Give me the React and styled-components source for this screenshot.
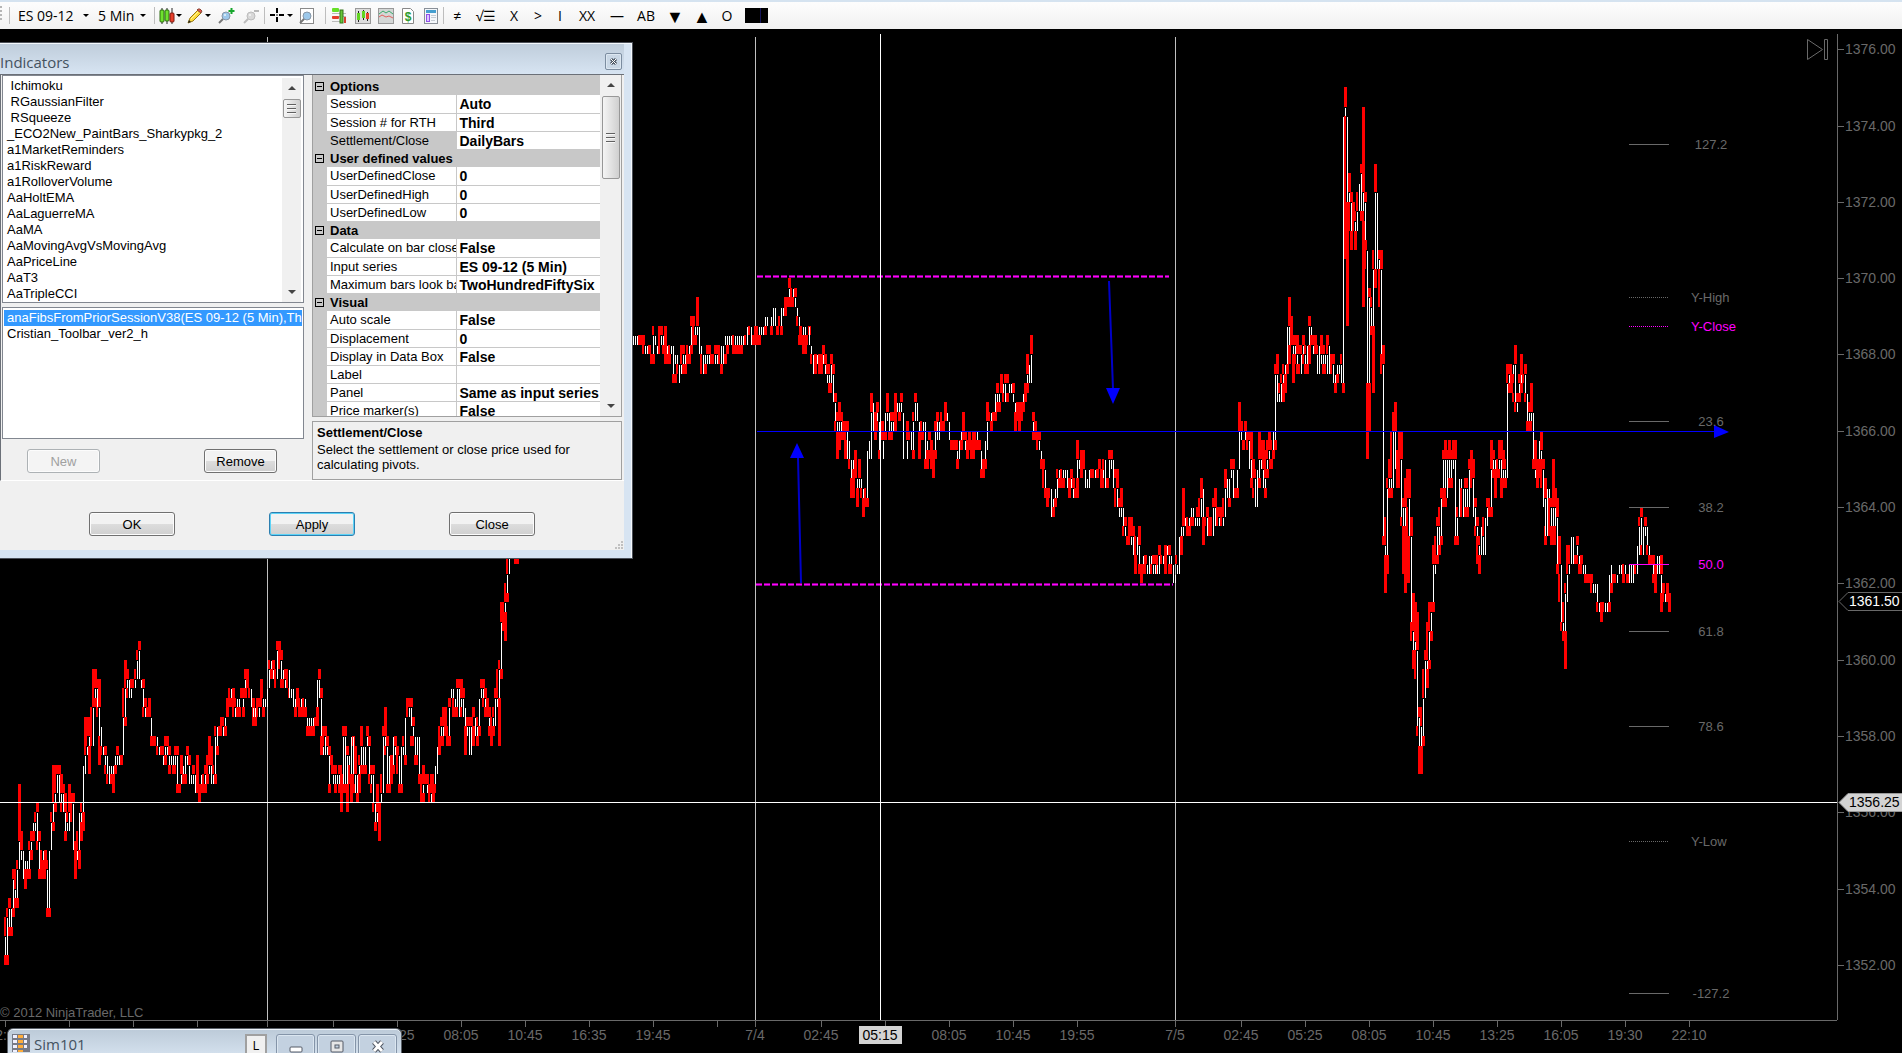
import React from 'react';

import styled, { createGlobalStyle } from 'styled-components';

const GlobalStyle = createGlobalStyle`
  * {
    box-sizing: border-box;
  }

  body {
    margin: 0;
    background: #000;
    overflow: hidden;
    font-family: "Liberation Sans", Arial, sans-serif;
    font-size: 13px;
  }

  button {
    font-family: inherit;
  }
`;

/* ---------- chart data ---------- */

// left, width, high, low (levels are counted in quarter points below 1376.00)
const WICKS = `
4 2 91 93,4 5 95 96,6 2 90 91,8 3 89 90,8 5 92 93,12 3 90 91,12 4 86 87,14 2 87 88,14 5 89 90,16 2 85 86,
18 3 77 83,20 3 82 84,24 7 86 87,24 3 87 88,28 2 83 84,30 3 84 85,30 5 82 83,34 2 80 81,36 3 79 80,36 2 83 84,
38 3 82 83,38 8 86 87,40 2 84 86,42 6 85 86,44 3 84 85,46 5 90 91,50 2 80 81,52 3 81 82,52 4 75 78,52 2 78 79,
54 3 79 80,56 5 75 76,60 3 76 77,60 5 77 78,64 3 78 80,60 2 79 80,68 3 77 80,71 4 78 79,70 2 79 81,66 2 80 81,
64 3 82 83,74 4 83 84,74 3 84 87,76 2 82 84,78 3 84 86,80 2 79 80,80 5 81 82,80 3 82 83,82 3 80 81,84 7 70 72,
84 3 72 73,84 2 73 74,88 3 73 76,90 2 69 73,92 5 65 67,92 2 67 69,94 3 68 69,96 2 69 70,97 4 66 67,98 3 67 69,
98 2 72 73,98 3 73 75,100 2 73 74,104 3 73 74,104 2 75 76,106 2 76 77,110 5 76 77,112 3 77 78,114 3 75 76,
116 3 73 74,119 4 74 75,122 2 67 70,124 3 70 71,124 3 64 66,124 2 66 67,126 3 65 66,126 2 67 68,130 4 66 67,
134 2 65 66,136 2 63 64,138 3 62 63,142 3 66 67,142 2 69 70,144 3 68 69,146 5 69 70,148 3 68 69,150 6 72 73,
156 2 73 74,160 4 73 74,164 5 72 73,164 3 74 75,168 3 73 74,168 3 75 76,172 4 75 76,174 5 73 74,176 5 77 78,
180 3 74 76,182 5 76 77,186 3 73 74,188 3 74 75,192 3 75 76,196 3 74 77,196 11 77 78,198 3 78 79,202 2 76 77,
204 4 75 76,206 3 76 77,206 7 74 75,208 3 72 74,210 3 73 74,212 2 75 76,214 3 76 77,214 2 71 72,216 3 73 74,
218 4 71 72,220 4 70 71,224 3 71 72,226 10 68 69,226 3 69 70,228 2 67 68,232 3 67 68,232 2 69 70,236 5 69 70,
240 7 67 68,242 3 69 70,244 5 65 66,246 3 66 67,248 2 67 68,252 3 68 70,252 5 70 71,256 6 68 69,256 2 69 70,
260 3 66 68,262 3 69 70,268 2 64 65,270 3 65 66,272 3 64 65,274 2 65 67,276 5 62 63,278 5 63 64,278 2 64 65,
280 4 66 67,284 4 65 66,286 2 66 67,288 2 67 68,294 3 69 70,296 3 67 68,296 4 68 69,298 9 69 70,302 2 68 69,
306 9 71 72,314 5 70 71,316 3 69 70,318 3 65 66,320 3 67 68,320 4 72 73,320 3 73 74,322 5 71 72,326 3 72 73,
328 3 73 74,330 3 74 75,328 3 77 78,331 6 75 76,334 3 77 78,338 4 75 76,338 6 77 78,340 3 76 80,342 5 71 72,
346 3 73 74,344 5 77 78,346 3 78 80,348 6 76 77,348 2 75 76,350 6 77 78,350 3 78 79,352 3 72 73,354 3 73 76,
356 3 78 79,358 3 76 78,358 2 74 75,360 3 71 73,360 7 75 76,366 3 71 72,368 3 72 73,368 2 76 77,370 5 75 76,
370 2 77 78,372 2 79 80,374 3 81 82,376 3 77 80,378 3 79 83,380 2 76 78,382 5 71 72,384 3 69 71,386 3 72 73,
384 2 73 74,386 5 77 78,390 3 74 77,392 3 75 76,394 3 72 73,396 3 73 74,396 2 74 76,398 5 77 78,402 2 72 73,
404 3 74 75,406 7 68 69,406 2 69 70,412 3 70 71,410 4 72 73,414 4 74 75,418 11 76 77,422 3 75 76,420 2 77 79,
420 5 78 79,428 8 77 78,428 2 78 79,432 3 78 79,430 4 76 77,438 3 73 74,438 6 72 73,438 2 71 72,440 7 70 71,
442 5 69 70,444 4 71 72,446 5 72 73,448 3 68 69,452 6 69 70,452 2 68 69,456 7 66 67,460 5 67 68,460 2 69 70,
464 3 71 74,466 7 70 71,472 3 69 70,472 3 71 73,476 3 72 73,478 3 71 72,476 2 70 71,480 5 66 67,484 3 67 68,
482 2 68 69,484 7 69 70,486 3 68 69,490 2 70 71,488 7 71 72,490 3 72 73,492 2 69 70,494 4 67 68,496 2 65 67,
498 3 68 73,498 2 64 65,500 3 65 66,500 4 58 60,502 4 60 61,504 3 59 62,504 2 56 58,505 4 57 58,506 2 53 55,
514 5 53 54,638 7 30 31,642 2 31 32,648 3 31 32,650 5 32 33,652 2 29 30,658 5 29 30,658 2 30 32,664 3 29 32,
662 2 31 32,664 7 32 33,668 2 31 32,672 5 34 35,676 2 33 34,680 5 31 32,680 2 32 33,682 5 33 34,686 5 32 33,
686 2 31 32,690 3 31 32,690 5 28 29,692 5 30 31,692 2 29 30,696 3 26 29,700 2 32 34,704 3 33 34,706 5 31 32,
710 4 32 33,714 6 31 32,718 2 32 33,720 3 33 34,724 3 32 33,726 3 31 32,732 11 31 32,732 2 30 31,744 2 30 31,
748 2 29 30,752 9 30 31,754 4 29 30,764 3 29 30,770 3 29 30,776 3 29 30,780 3 29 30,778 2 28 29,784 10 26 27,
784 3 27 28,788 3 24 25,790 2 25 26,794 3 25 26,796 2 28 29,798 10 30 31,799 3 29 30,802 5 31 32,808 3 29 30,
810 2 32 33,814 3 32 34,818 5 32 34,822 3 31 32,824 3 32 33,826 4 33 34,830 3 32 33,832 3 33 34,828 4 35 36,
834 3 36 37,838 3 37 38,836 7 38 39,834 2 39 40,842 7 39 40,836 10 40 41,836 5 41 42,836 3 42 43,844 3 41 43,
848 2 43 44,854 3 42 44,858 3 43 45,852 5 44 45,850 5 45 47,856 3 46 48,860 2 46 47,864 2 46 47,862 7 47 48,
862 3 48 49,870 3 36 38,876 3 37 38,874 4 38 40,874 3 40 41,878 2 42 43,880 4 39 40,881 6 40 41,886 3 36 38,
888 5 40 41,890 7 38 39,894 3 36 40,898 3 38 39,900 3 36 37,906 3 39 41,908 2 40 41,912 2 38 39,912 3 42 43,
914 3 36 37,918 3 40 43,918 6 40 41,920 2 39 40,928 3 40 41,926 11 42 43,924 5 43 44,930 5 43 44,932 3 44 45,
930 3 41 42,934 4 39 40,936 3 38 39,940 5 39 40,940 2 38 39,944 3 37 39,950 8 41 42,956 3 43 44,959 4 41 42,
962 3 38 41,962 5 40 41,966 15 41 42,968 3 40 41,972 4 40 41,966 3 42 43,970 5 42 43,980 5 44 45,982 5 43 44,
986 3 37 39,986 4 38 39,990 3 39 40,992 5 38 39,996 5 37 38,996 3 35 36,1000 3 34 36,1004 5 34 35,1002 2 36 37,
1006 3 36 37,1012 3 35 36,1016 9 37 38,1014 9 38 39,1014 3 39 40,1018 3 39 40,1024 3 36 37,1024 5 35 36,
1026 3 32 34,1030 3 30 32,1032 3 38 39,1034 3 39 40,1032 9 40 41,1036 2 41 42,1040 5 43 44,1042 2 44 46,
1044 6 46 47,1046 3 47 48,1052 3 48 49,1054 3 47 48,1056 2 44 45,1060 2 44 45,1058 7 45 46,1068 3 45 47,
1070 3 44 45,1072 3 45 46,1074 5 46 47,1076 3 45 46,1076 3 41 43,1080 5 42 44,1080 3 44 45,1090 4 44 45,
1096 3 44 45,1098 3 43 44,1102 2 43 44,1100 4 44 46,1106 3 45 46,1108 5 42 43,1114 5 44 45,1116 3 45 46,
1114 2 46 48,1120 3 46 47,1118 5 47 48,1124 3 49 50,1128 5 49 50,1122 2 50 51,1128 7 50 51,1126 4 51 52,
1134 2 51 53,1138 3 50 52,1134 3 53 55,1138 8 54 55,1140 3 55 56,1144 3 53 54,1150 2 54 55,1152 6 53 54,
1156 2 54 55,1158 3 52 53,1160 2 53 54,1164 3 52 55,1168 3 52 53,1168 4 54 55,1175 2 53 54,1180 3 51 53,
1182 3 46 50,1186 2 49 50,1186 5 50 51,1190 4 49 50,1196 3 48 49,1198 2 47 49,1200 3 45 47,1202 3 49 52,
1204 2 49 50,1206 3 48 49,1208 4 49 51,1212 4 47 48,1214 3 46 48,1216 6 48 49,1216 2 49 50,1220 2 49 50,
1222 2 47 49,1224 3 44 46,1228 3 47 48,1230 5 43 44,1234 5 46 47,1238 3 37 40,1240 3 39 40,1244 3 39 40,
1242 3 41 42,1246 7 40 41,1246 2 41 42,1250 3 41 43,1252 3 43 44,1252 4 44 45,1250 3 45 46,1252 2 46 47,
1258 3 40 43,1258 3 45 46,1261 4 41 43,1262 4 43 44,1266 6 41 42,1264 4 42 43,1268 3 40 41,1264 5 44 45,
1264 3 46 47,1269 4 43 44,1272 3 42 43,1274 3 41 42,1274 5 33 34,1276 3 32 33,1278 2 35 36,1280 2 34 35,
1282 2 33 34,1282 3 35 37,1284 3 34 36,1286 3 33 34,1288 3 31 33,1288 3 26 29,1290 3 28 31,1293 6 30 31,
1292 4 32 33,1292 3 33 35,1296 4 31 32,1296 4 33 34,1298 4 31 32,1302 3 30 31,1302 2 32 33,1304 5 33 34,
1304 2 31 32,1308 3 31 33,1308 3 28 29,1310 7 30 31,1314 4 31 32,1320 3 30 31,1320 5 31 32,1322 4 33 34,
1326 3 30 31,1326 2 31 32,1330 5 32 33,1330 2 33 34,1334 3 35 36,1336 3 34 35,1340 2 32 33,1342 3 35 36,
1344 3 4 6,1344 2 7 22,1346 3 16 29,1346 4 16 19,1348 3 13 15,1350 3 15 16,1352 3 16 18,1350 3 19 21,
1352 2 18 19,1354 2 17 18,1354 3 19 21,1356 2 15 17,1360 2 12 13,1362 3 6 15,1364 3 15 16,1360 4 17 18,
1362 3 18 27,1364 3 20 21,1364 2 21 23,1368 3 25 26,1370 2 26 27,1372 2 21 23,1374 3 12 15,1378 5 21 22,
1380 3 22 23,1374 3 23 25,1378 2 23 27,1370 5 29 30,1372 3 30 36,1366 5 35 40,1366 3 40 43,1382 3 31 33,
1380 2 32 34,1382 4 51 52,1384 2 49 51,1384 5 53 55,1384 3 55 57,1386 2 45 46,1388 4 43 45,1390 2 40 43,
1388 5 46 47,1392 5 38 40,1394 3 37 38,1396 4 42 46,1398 5 40 43,1400 2 49 50,1402 3 47 48,1404 3 45 48,
1406 5 44 47,1402 4 50 55,1404 3 55 57,1406 4 51 56,1406 2 48 51,1410 3 49 51,1410 2 60 62,1412 3 57 61,
1414 3 58 62,1416 3 59 63,1412 4 63 65,1414 2 65 66,1416 2 71 72,1418 4 69 70,1420 2 70 71,1418 5 73 76,
1422 3 72 73,1422 2 65 68,1424 4 63 64,1426 3 65 67,1426 2 60 63,1428 3 64 65,1428 2 58 61,1430 3 61 62,
1430 5 58 59,1432 3 52 54,1434 2 51 53,1434 5 53 54,1436 4 49 50,1438 2 48 50,1438 3 52 53,1440 3 51 52,
1440 6 46 47,1442 5 47 48,1442 15 42 43,1444 3 41 42,1448 3 41 43,1452 5 41 43,1448 5 45 46,1454 5 51 52,
1456 2 48 49,1460 2 46 49,1464 4 45 46,1464 5 48 49,1468 3 43 44,1470 3 42 43,1471 4 43 45,1470 2 44 46,
1474 3 47 48,1476 3 49 50,1474 2 50 51,1476 4 51 52,1476 2 52 54,1478 3 53 55,1482 2 49 51,1486 4 47 48,
1488 5 48 49,1490 3 41 44,1492 3 42 43,1492 8 44 45,1494 3 45 47,1496 2 43 44,1498 5 41 43,1502 4 43 44,
1502 3 42 43,1500 7 45 46,1500 3 46 47,1506 6 33 34,1506 2 34 35,1508 5 35 36,1510 4 34 35,1512 2 36 37,
1514 3 31 33,1514 2 37 38,1516 5 36 37,1518 2 34 35,1520 3 32 34,1520 4 34 35,1520 3 35 36,1524 3 33 34,
1524 2 36 37,1528 5 37 38,1530 3 35 37,1526 6 39 40,1534 3 41 43,1532 4 43 44,1536 4 43 45,1536 3 45 46,
1540 3 40 42,1540 5 43 44,1540 2 44 46,1544 3 45 47,1544 2 50 51,1544 3 51 52,1548 7 47 48,1552 3 43 47,
1555 2 46 48,1556 3 47 49,1548 2 48 51,1550 6 50 52,1558 3 51 54,1556 3 54 55,1558 2 55 58,1560 2 60 61,
1562 2 58 60,1562 4 61 62,1564 3 61 65,1564 2 56 57,1566 4 52 54,1566 2 54 55,1574 4 53 54,1576 3 51 52,
1580 3 53 54,1578 4 54 55,1584 9 55 56,1590 2 56 57,1596 2 58 59,1600 4 58 59,1600 3 59 60,1608 3 58 59,
1610 3 56 57,1612 4 55 56,1622 3 55 56,1622 2 54 55,1626 4 55 56,1634 2 54 55,1638 2 49 50,1640 3 48 49,
1644 3 49 50,1640 2 52 53,1646 2 52 53,1648 7 53 54,1654 4 54 55,1652 5 55 56,1654 3 56 57,1660 3 53 55,
1662 3 56 57,1660 4 57 58,1660 3 58 59,1666 3 56 57,1666 5 57 58,1668 3 58 59`;

// x, top, bottom in the same quarter point levels
const BODIES = `
5 93 95,7 91 95,9 90 92,11 90 92,13 87 90,15 88 89,17 86 89,19 83 86,21 84 85,23 84 87,25 85 86,27 85 86,29 84 86,
31 83 84,33 81 82,35 81 82,37 80 83,39 83 86,43 84 85,47 86 90,49 84 90,51 81 84,53 79 81,55 78 79,57 76 78,
59 76 79,61 78 79,63 78 80,65 80 82,67 81 82,69 80 82,73 79 84,77 84 85,79 80 84,81 80 81,83 75 80,85 74 76,
87 73 74,89 72 73,93 69 73,95 67 68,97 67 69,99 69 72,101 71 73,103 73 74,105 74 75,107 74 76,109 75 77,
111 75 76,113 75 76,115 74 75,117 74 75,119 74 75,123 70 74,125 67 70,127 66 67,129 66 68,131 67 68,135 66 67,
137 64 66,139 63 66,141 66 67,143 67 69,145 69 70,151 70 72,157 72 73,159 73 74,163 74 75,165 73 74,167 73 74,
169 74 75,171 74 75,173 74 75,175 74 75,177 74 77,181 76 77,183 75 76,185 74 76,187 74 75,189 75 77,191 76 77,
193 76 77,195 76 78,201 76 77,205 76 77,209 75 76,211 75 77,213 76 77,215 72 76,217 71 73,223 71 72,225 70 71,
231 67 68,235 69 70,237 68 69,239 68 69,243 68 69,245 66 67,251 67 69,253 69 70,255 69 70,259 69 70,263 68 69,
265 68 69,267 67 69,269 65 67,271 64 65,273 65 66,277 63 66,281 64 66,283 65 66,285 66 67,289 65 68,291 67 68,
293 67 69,295 68 69,301 68 69,305 68 69,307 70 71,309 70 71,311 70 71,313 70 71,317 66 69,319 66 68,321 68 72,
323 73 74,325 72 74,327 73 74,329 74 77,333 76 77,335 76 77,337 76 77,339 76 77,343 72 77,345 72 77,347 74 77,
349 74 75,351 72 76,353 72 76,355 76 78,357 76 78,359 75 76,361 73 75,363 73 75,365 73 75,367 72 73,369 73 76,
371 76 77,373 76 79,375 79 81,377 80 81,381 78 79,383 72 78,385 72 73,387 73 77,389 74 77,393 72 75,395 73 74,
399 74 77,401 73 77,403 73 74,405 70 74,409 69 70,411 69 71,413 71 72,415 72 74,417 72 74,419 72 76,423 77 78,
427 77 78,431 78 79,435 75 77,437 73 76,441 71 72,443 71 72,449 69 72,451 67 68,453 67 68,455 68 69,457 67 69,
459 67 70,461 68 69,463 68 70,465 69 71,467 71 72,469 71 74,471 71 74,475 70 72,477 71 72,479 68 71,481 67 68,
483 67 68,485 68 69,489 70 71,493 70 71,495 68 71,497 68 69,499 65 68,501 60 65,505 58 59,507 55 57,509 53 55,
633 30 31,635 30 31,637 30 31,645 31 32,647 31 32,653 30 32,655 30 31,657 31 32,661 30 31,663 30 31,667 31 32,
671 31 32,673 31 34,675 32 33,677 32 33,679 33 35,681 33 34,683 32 33,685 32 33,689 31 32,691 29 31,695 29 30,
697 29 30,699 29 32,701 31 32,703 32 34,705 32 33,707 32 33,709 32 33,715 32 33,717 32 33,721 31 33,723 31 33,
725 30 31,727 30 31,729 30 31,731 30 31,735 30 31,737 30 31,739 30 31,741 30 31,743 30 31,747 29 31,751 29 31,
759 29 30,761 29 30,763 29 30,765 28 29,767 28 29,771 28 29,773 27 29,775 27 29,781 27 29,783 27 28,789 25 26,
793 25 26,795 26 27,797 27 28,799 28 29,803 29 30,805 29 30,809 29 31,811 31 32,813 32 34,817 32 33,823 32 33,
825 33 34,827 34 35,829 34 35,831 33 35,833 34 37,835 37 39,837 39 40,839 39 40,841 39 40,847 40 43,849 41 43,
851 43 45,853 43 44,857 45 46,859 45 46,861 45 46,863 46 47,867 42 47,869 41 43,871 38 43,873 37 40,877 38 39,
879 39 42,883 41 43,885 38 40,887 38 39,889 38 40,891 39 40,893 39 40,897 37 38,899 37 38,901 37 38,903 38 43,
907 41 43,911 40 42,913 39 42,915 37 39,917 37 39,919 39 40,923 39 40,925 39 43,927 41 42,935 40 42,937 39 41,
939 39 41,947 38 39,949 39 41,957 42 43,959 41 43,961 40 41,965 41 42,977 40 41,981 42 44,985 41 43,987 39 42,
991 38 39,995 36 38,997 36 37,999 36 37,1003 35 36,1005 35 37,1009 35 36,1011 35 36,1013 36 37,1015 37 38,
1023 36 37,1027 34 35,1029 33 35,1031 32 35,1033 39 40,1039 41 42,1041 42 43,1045 44 46,1051 46 49,1053 47 48,
1055 46 47,1057 45 47,1059 44 45,1063 44 45,1065 44 45,1067 44 46,1071 45 46,1073 46 47,1077 43 45,1079 43 44,
1085 44 46,1087 45 46,1089 44 46,1095 44 45,1103 44 45,1105 43 46,1109 43 45,1111 43 44,1113 43 46,1117 46 48,
1119 48 49,1121 48 49,1123 48 50,1125 50 51,1131 51 52,1133 51 53,1137 51 53,1139 52 54,1143 53 54,1147 54 55,
1149 53 55,1151 53 54,1153 54 55,1155 54 55,1157 54 55,1159 53 55,1163 53 54,1167 52 53,1169 53 54,1171 53 54,
1173 54 56,1175 55 56,1177 54 55,1179 51 55,1181 50 51,1183 50 51,1185 49 50,1189 49 50,1191 48 49,1193 48 49,
1195 49 50,1197 49 50,1199 49 50,1201 47 49,1203 46 49,1207 49 51,1213 48 51,1215 48 50,1219 49 50,1223 49 50,
1225 46 49,1227 45 47,1229 45 47,1231 44 45,1233 44 47,1237 44 46,1239 40 44,1241 40 41,1245 40 41,1249 41 44,
1251 43 45,1255 45 48,1257 44 48,1259 43 45,1261 43 44,1263 44 46,1265 45 46,1267 43 44,1269 42 43,1273 40 42,
1275 34 41,1277 34 37,1279 36 37,1281 35 37,1283 34 35,1285 33 34,1287 29 33,1289 29 31,1293 31 32,1295 31 32,
1297 32 33,1301 32 34,1303 31 32,1305 32 33,1307 31 33,1309 29 31,1311 29 30,1313 31 32,1317 32 34,1319 31 34,
1321 32 33,1323 32 33,1325 32 33,1327 32 34,1329 31 34,1333 33 35,1335 34 35,1337 33 34,1339 33 34,1341 33 35,
1343 7 35,1345 6 7,1347 7 16,1349 15 16,1351 16 19,1355 18 19,1357 17 19,1359 14 17,1361 13 17,1363 15 17,
1365 16 20,1367 21 35,1369 26 35,1371 27 29,1373 23 29,1375 15 23,1377 15 23,1379 22 23,1381 23 32,1383 33 51,
1385 52 53,1387 46 53,1389 45 46,1391 45 46,1393 40 46,1395 40 44,1401 43 49,1403 48 50,1405 48 50,1409 47 51,
1411 51 60,1413 61 63,1415 62 63,1417 63 71,1419 70 73,1421 71 73,1423 68 72,1425 64 68,1427 64 65,1429 61 64,
1431 59 61,1433 54 58,1435 54 55,1437 50 53,1439 50 52,1441 47 51,1443 43 46,1445 43 46,1447 43 47,1449 43 45,
1451 43 45,1453 43 44,1455 43 51,1457 49 51,1459 45 49,1461 45 46,1463 46 49,1465 46 48,1467 46 48,1469 44 48,
1473 45 49,1475 48 50,1477 50 51,1479 52 53,1481 50 53,1483 51 53,1485 49 53,1487 48 50,1491 44 48,1493 43 44,
1495 43 44,1499 43 44,1501 43 45,1503 44 45,1505 44 45,1507 35 45,1509 34 35,1513 33 34,1515 33 37,1517 37 38,
1519 35 36,1521 34 35,1525 34 36,1527 36 39,1529 38 39,1531 38 39,1533 38 43,1535 44 45,1539 41 43,1541 42 43,
1543 44 48,1545 47 51,1547 46 51,1549 46 47,1551 48 50,1553 48 50,1555 48 50,1557 49 54,1561 54 60,1563 60 61,
1565 57 61,1567 55 58,1569 54 55,1571 51 54,1573 51 54,1577 52 53,1579 53 54,1583 54 55,1585 54 55,1593 56 57,
1595 56 57,1597 56 58,1599 58 59,1605 58 59,1607 58 59,1609 55 58,1611 54 56,1617 55 56,1619 54 55,1621 54 55,
1625 54 55,1629 54 56,1631 54 56,1633 54 56,1637 52 55,1639 50 53,1641 49 52,1643 50 53,1645 50 51,1647 50 52,
1649 52 53,1653 54 55,1657 53 55,1659 53 55,1661 55 57,1665 57 58`;

const parse = (text) =>
  text
    .trim()
    .split(',')
    .map((item) => item.trim().split(' ').map(Number));

const levelY = (level) => Math.round(49.3 + level * 9.537);

const wickPath = parse(WICKS)
  .map(
    ([x, w, high, low]) =>
      `M${x} ${levelY(high)}h${w}V${levelY(low)}h${-w}z`
  )
  .join('');

const bodyPath = parse(BODIES)
  .map(([x, top, bottom]) => `M${x} ${levelY(top) + 1}h1V${levelY(bottom)}h-1z`)
  .join('');

const prices = [
  1376, 1374, 1372, 1370, 1368, 1366, 1364, 1362, 1360, 1358, 1356, 1354, 1352,
];

const times = [
  [5, '22:10'],
  [69, ''],
  [133, ''],
  [197, ''],
  [267, ''],
  [333, ''],
  [397, '05:25'],
  [461, '08:05'],
  [525, '10:45'],
  [589, '16:35'],
  [653, '19:45'],
  [717, ''],
  [755, '7/4'],
  [821, '02:45'],
  [885, ''],
  [949, '08:05'],
  [1013, '10:45'],
  [1077, '19:55'],
  [1175, '7/5'],
  [1241, '02:45'],
  [1305, '05:25'],
  [1369, '08:05'],
  [1433, '10:45'],
  [1497, '13:25'],
  [1561, '16:05'],
  [1625, '19:30'],
  [1689, '22:10'],
];

const GREY = '#696969';
const PINK = '#ff00ff';

const fibs = [
  { y: 144, label: '127.2' },
  { y: 297, label: 'Y-High', dotted: true },
  { y: 326, label: 'Y-Close', dotted: true, color: PINK },
  { y: 421, label: '23.6' },
  { y: 507, label: '38.2' },
  { y: 564, label: '50.0', color: PINK },
  { y: 631, label: '61.8' },
  { y: 726, label: '78.6' },
  { y: 841, label: 'Y-Low', dotted: true },
  { y: 993, label: '-127.2' },
];

/* ---------- page ---------- */

const Page = styled.div`
  display: flex;
  flex-direction: column;
  height: 100vh;
  position: relative;
  overflow: hidden;
`;

const Workspace = styled.main`
  flex: 1;
  min-height: 0;
  background: #000;
`;

const ChartSvg = styled.svg`
  display: block;
  width: 100%;
  height: 100%;

  text {
    font-family: "Liberation Sans", Arial, sans-serif;
    font-size: 14px;
    fill: ${GREY};
  }

  .small {
    font-size: 13px;
  }
`;

/* ---------- toolbar ---------- */

const Bar = styled.header`
  display: flex;
  align-items: center;
  height: 29px;
  padding-left: 9px;
  border-top: 2px solid #d5e3f0;
  background: linear-gradient(#fdfdfd, #f1f1f1);
  position: relative;
  font-family: "Open Sans", "Noto Sans", sans-serif;
`;

const Grip = styled.span`
  position: absolute;
  left: 0;
  top: 4px;
  width: 2px;
  height: 16px;
  background: repeating-linear-gradient(#b5b5b5 0 2px, transparent 2px 4px);
`;

const Separator = styled.span`
  width: 1px;
  height: 17px;
  flex: none;
  background: #bdbdbd;
`;

const ToolButton = styled.button`
  display: flex;
  align-items: center;
  justify-content: ${({ $menu }) => ($menu ? 'space-between' : 'center')};
  flex: none;
  width: ${({ $width }) => $width}px;
  height: 24px;
  padding: 0;
  padding-left: ${({ $lead }) => $lead || 0}px;
  padding-right: ${({ $menu }) => ($menu ? 2 : 0)}px;
  border: 0;
  background: none;
  color: #000;
  font-size: ${({ $large }) => ($large ? 18 : 14)}px;
  line-height: 20px;
  white-space: nowrap;
`;

const Spacer = styled.span`
  flex: none;
  width: 6px;
`;

const Caret = styled.span`
  border: 3px solid transparent;
  border-top-color: #000;
  border-bottom: 0;
`;

const Swatch = styled.span`
  width: 23px;
  height: 15px;
  background: linear-gradient(90deg, #000 65%, #16165a 65% 69%, #000 69%);
`;

const CandlesIcon = () => (
  <svg width="16" height="16" viewBox="0 0 16 16">
    <path d="M3 0v16M8 0v16M13 0v16" stroke="#222" />
    <rect x="1" y="2" width="4" height="12" rx="1" fill="#6fe22e" stroke="#2c6a10" />
    <rect x="6" y="2" width="4" height="11" rx="1" fill="#6fe22e" stroke="#2c6a10" />
    <rect x="11" y="5" width="4" height="9" rx="1" fill="#e8402c" stroke="#7d1a10" />
  </svg>
);

const PencilIcon = () => (
  <svg width="16" height="16" viewBox="0 0 16 16">
    <path d="M1 15l2-5 8-8 3 3-8 8z" fill="#ffdd3c" stroke="#997a14" />
    <path d="M10 2l1-1 2 0 2 2-1 2z" fill="#e4574b" stroke="#8a4a3a" />
    <path d="M1 15l1-3 2 2z" fill="#222" />
    <path d="M4 11l7-7" stroke="#fff3a0" />
  </svg>
);

const LensIcon = ({ sign }) => (
  <svg width="17" height="16" viewBox="0 0 17 16">
    <path d="M5 11l-4 4" stroke={sign === '-' ? '#bbb' : '#777'} strokeWidth="2" />
    <circle
      cx="8"
      cy="8"
      r="4"
      fill={sign === '-' ? '#d8d8d8' : '#9cc8ea'}
      stroke={sign === '-' ? '#bcbcbc' : '#8796a6'}
    />
    <circle cx="7" cy="7" r="1" fill="#fff" opacity=".8" />
    {sign === '+' && <path d="M13.5 0v6M10.5 3h6" stroke="#16a62c" strokeWidth="2" />}
    {sign === '-' && <path d="M11 3h5" stroke="#b8b8b8" strokeWidth="2" />}
  </svg>
);

const CrossIcon = () => (
  <svg width="15" height="15" viewBox="0 0 15 15">
    <path d="M7 0v5M7 9v5M0 7h5M9 7h5" stroke="#000" strokeWidth="2" />
    <rect x="6" y="6" width="2" height="2" fill="#888" />
  </svg>
);

const PageLensIcon = () => (
  <svg width="16" height="16" viewBox="0 0 16 16">
    <rect x="1.5" y=".5" width="13" height="15" fill="#fff" stroke="#8a8a8a" />
    <path d="M6 10l-5 5" stroke="#777" strokeWidth="2" />
    <circle cx="8" cy="8" r="4" fill="#9cc8ea" stroke="#8796a6" />
  </svg>
);

const DomIcon = () => (
  <svg width="16" height="16" viewBox="0 0 16 16">
    <path d="M1 5.5h14M1 8.5h14M1 13.5h8" stroke="#bbb" />
    <rect x="1" y="0" width="7" height="4" rx="1" fill="#67df27" />
    <rect x="1" y="8" width="7" height="3" rx="1" fill="#e23c2c" />
    <rect x="9" y="2" width="3" height="13" fill="#67c637" stroke="#35731a" />
    <rect x="13" y="9" width="2" height="6" fill="#d94131" />
  </svg>
);

const BarsIcon = () => (
  <svg width="16" height="16" viewBox="0 0 16 16">
    <rect x=".5" y=".5" width="15" height="15" fill="#ddd" stroke="#999" />
    <path d="M3.5 3v11M8.5 2v10M12.5 4v9" stroke="#222" />
    <rect x="2" y="5" width="3" height="7" fill="#62d422" />
    <rect x="7" y="3" width="3" height="7" fill="#62d422" />
    <rect x="11" y="5" width="3" height="6" fill="#e8402c" />
  </svg>
);

const WaveIcon = () => (
  <svg width="16" height="16" viewBox="0 0 16 16">
    <rect x=".5" y=".5" width="15" height="15" fill="#d4d7d6" stroke="#999" />
    <path d="M1 6l4-3 3 2 3-2 4 3" fill="none" stroke="#3aa96a" />
    <path d="M1 9l3-2 4 2 3-1 4 2" fill="none" stroke="#e0605c" />
  </svg>
);

const DollarIcon = () => (
  <svg width="14" height="16" viewBox="0 0 14 16">
    <path d="M1.5.5h8l3 3v12h-11z" fill="#fff" stroke="#888" />
    <text x="7" y="13" textAnchor="middle" fontSize="12" fontWeight="700" fill="#2d9b2d" fontFamily="Liberation Sans">
      $
    </text>
  </svg>
);

const FormIcon = () => (
  <svg width="14" height="16" viewBox="0 0 14 16">
    <rect x=".5" y=".5" width="13" height="15" fill="#f4f7fa" stroke="#8a9098" />
    <rect x="2" y="2" width="10" height="3" fill="#459fd0" />
    <rect x="2.5" y="6.5" width="3" height="7" fill="#dcc6ff" stroke="#9250e8" />
    <path d="M7 7.5h5M7 9.5h5M7 12.5h4" stroke="#c6cdd4" />
  </svg>
);

const symbols = [
  ['≠', 27],
  ['√☰', 30],
  ['X', 26],
  ['>', 22],
  ['I', 22],
  ['XX', 32],
  ['—', 28],
  ['AB', 30],
  ['▼', 28, true],
  ['▲', 26, true],
  ['O', 24],
];

function Toolbar() {
  return (
    <Bar>
      <Grip />
      <Separator />
      <ToolButton $width={81} $lead={8} $menu>
        <span>ES 09-12</span>
        <Caret />
      </ToolButton>
      <ToolButton $width={57} $lead={7} $menu>
        <span>5 Min</span>
        <Caret />
      </ToolButton>
      <Spacer />
      <Separator />
      <ToolButton $width={29} $lead={4} $menu aria-label="Chart style">
        <CandlesIcon />
        <Caret />
      </ToolButton>
      <ToolButton $width={29} $lead={3} $menu aria-label="Drawing tools">
        <PencilIcon />
        <Caret />
      </ToolButton>
      <ToolButton $width={26} aria-label="Zoom in">
        <LensIcon sign="+" />
      </ToolButton>
      <ToolButton $width={25} aria-label="Zoom out">
        <LensIcon sign="-" />
      </ToolButton>
      <Separator />
      <ToolButton $width={30} $lead={5} $menu aria-label="Cursor">
        <CrossIcon />
        <Caret />
      </ToolButton>
      <ToolButton $width={24} aria-label="Show page">
        <PageLensIcon />
      </ToolButton>
      <Spacer />
      <Separator />
      <ToolButton $width={25} aria-label="Chart trader">
        <DomIcon />
      </ToolButton>
      <ToolButton $width={23} aria-label="Data series">
        <BarsIcon />
      </ToolButton>
      <ToolButton $width={23} aria-label="Indicators">
        <WaveIcon />
      </ToolButton>
      <ToolButton $width={22} aria-label="Strategies">
        <DollarIcon />
      </ToolButton>
      <ToolButton $width={24} aria-label="Properties">
        <FormIcon />
      </ToolButton>
      <Separator />
      {symbols.map(([label, width, large]) => (
        <ToolButton key={label} $width={width} $large={large}>
          {label}
        </ToolButton>
      ))}
      <ToolButton $width={34} aria-label="Colour">
        <Swatch />
      </ToolButton>
    </Bar>
  );
}

/* ---------- chart ---------- */

function Chart() {
  return (
    <ChartSvg viewBox="0 29 1902 1024" preserveAspectRatio="xMinYMin slice">
      <g fill="#c0c0c0">
        <rect x="267" y="37" width="1" height="983" />
        <rect x="755" y="37" width="1" height="983" />
        <rect x="1175" y="37" width="1" height="983" />
      </g>
      <g shapeRendering="crispEdges">
        <path d={wickPath} fill="#f00" />
        <path d={bodyPath} fill="#fff" />
      </g>

      <path d="M757 276.5H1169M756 584.5H1173" stroke="#900090" strokeWidth="3" strokeDasharray="6 2" />
      <path d="M757 276.5H1169M756 584.5H1173" stroke={PINK} strokeDasharray="6 2" />
      <rect x="757" y="431" width="958" height="1" fill="#00f" />
      <path d="M1714 425v13l15-6z" fill="#00f" />
      <path d="M801 583L798 457M1109 281L1113 389" stroke="#0000c8" strokeWidth="2" />
      <path d="M797 443l7 15h-14zM1113 404l7-16h-14z" fill="#00f" />

      {fibs.map(({ y, label, dotted, color = GREY }) => (
        <g key={label}>
          <path
            d={`M1629 ${y}.5h40`}
            stroke={color}
            strokeDasharray={dotted ? '1 1' : undefined}
          />
          <text
            className="small"
            x={label.startsWith('Y') ? 1691 : 1711}
            y={y + 5}
            textAnchor={label.startsWith('Y') ? 'start' : 'middle'}
            style={{ fill: color }}
          >
            {label}
          </text>
        </g>
      ))}

      <g fill="#fff">
        <rect x="880" y="34" width="1" height="986" />
        <rect x="0" y="802" width="1837" height="1" />
      </g>

      <g fill="none" stroke={GREY}>
        <path d="M1837.5 34V1020M0 1020.5H1837" />
        <path d="M1807.5 39.5v20l15-10zM1824.5 39.5h3v20h-3z" />
      </g>

      {prices.map((price) => {
        const y = levelY((1376 - price) * 4);
        return (
          <g key={price}>
            <rect x="1838" y={y} width="6" height="1" fill={GREY} />
            <text x="1845" y={y + 5}>
              {price.toFixed(2)}
            </text>
          </g>
        );
      })}

      <path d="M1839 601.5l9-9h60v18h-60z" fill="#000" stroke={GREY} />
      <text x="1849" y="606" style={{ fill: '#fff' }}>
        1361.50
      </text>
      <path d="M1839 802.5l9-9h60v18h-60z" fill="#d3d3d3" stroke="#999" />
      <text x="1849" y="807" style={{ fill: '#000' }}>
        1356.25
      </text>

      {times.map(([x, label]) => (
        <g key={x}>
          <rect x={x} y="1021" width="1" height="6" fill={GREY} />
          <text x={x} y="1040" textAnchor="middle">
            {label}
          </text>
        </g>
      ))}
      <rect x="859" y="1026" width="43" height="18" fill="#d3d3d3" />
      <text x="880" y="1040" textAnchor="middle" style={{ fill: '#000' }}>
        05:15
      </text>
      <text className="small" x="0" y="1017">
        © 2012 NinjaTrader, LLC
      </text>
    </ChartSvg>
  );
}

/* ---------- indicators dialog ---------- */

const Dialog = styled.section`
  position: absolute;
  left: 0;
  top: 42px;
  width: 633px;
  padding-right: 8px;
  padding-bottom: 8px;
  border: 1px solid #4b5058;
  border-left: 0;
  background: #d7e4f2;
  box-shadow: inset -1px 1px 0 #f4f8fc;
  color: #000;
`;

const TitleBar = styled.div`
  display: flex;
  align-items: center;
  justify-content: space-between;
  height: 31px;
  margin-top: 1px;
  padding: 5px 2px 0 0;
  background: linear-gradient(#bfcddb, #d7e4f2);
  border-bottom: 1px solid #6b7078;
  font: 15px/20px "Open Sans", "Noto Sans", sans-serif;
  color: #44525f;
`;

const CloseBox = styled.button`
  width: 17px;
  height: 17px;
  padding: 0;
  border: 1px solid #7c8da0;
  border-radius: 2px;
  background: #c9d7e5;
  box-shadow: inset 0 0 0 1px #dce7f1;
  line-height: 0;
`;

const Content = styled.div`
  background: #f0f0f0;
`;

const Columns = styled.div`
  display: flex;
  gap: 8px;
  height: 406px;
  padding: 0 2px 0 1px;
  border-left: 1px solid #6b7078;
  border-bottom: 1px solid #fff;
`;

const LeftColumn = styled.div`
  display: flex;
  flex-direction: column;
  gap: 4px;
  width: 302px;
`;

const ListFrame = styled.div`
  display: flex;
  height: ${({ $height }) => $height}px;
  padding: 2px 1px 0;
  border: 1px solid #828790;
  background: #fff;
`;

const List = styled.ul`
  flex: 1;
  min-width: 0;
  margin: 0;
  padding: 0;
  list-style: none;
  overflow: hidden;
`;

const Item = styled.li`
  padding-left: 3px;
  line-height: 16px;
  white-space: pre;
  overflow: hidden;
  background: ${({ $selected }) => ($selected ? '#3399ff' : 'none')};
  color: ${({ $selected }) => ($selected ? '#fff' : '#000')};
`;

const ScrollTrack = styled.div`
  display: flex;
  flex-direction: column;
  align-items: center;
  flex: none;
  width: 19px;
  margin-right: 1px;
  padding: 8px 0;
  background: #f0f0f0;
`;

const Arrow = styled.span`
  border: 4px solid transparent;
  ${({ $down }) =>
    $down
      ? 'margin-top: auto; border-top-color: #444; border-bottom: 0;'
      : 'margin-bottom: 9px; border-bottom-color: #444; border-top: 0;'}
`;

const Thumb = styled.span`
  display: flex;
  align-items: center;
  justify-content: center;
  width: 18px;
  height: ${({ $height }) => $height}px;
  border: 1px solid #979797;
  border-radius: 2px;
  background: linear-gradient(90deg, #f5f5f5, #cfcfcf);

  &::after {
    content: '';
    width: 9px;
    height: 10px;
    background: repeating-linear-gradient(#606060 0 1px, #f8f8f8 1px 2px, transparent 2px 4px);
  }
`;

function ScrollBar({ thumb }) {
  return (
    <ScrollTrack>
      <Arrow />
      <Thumb $height={thumb} />
      <Arrow $down />
    </ScrollTrack>
  );
}

const Button = styled.button`
  width: ${({ $wide }) => ($wide ? 86 : 73)}px;
  height: 24px;
  padding: 0;
  border: 1px solid ${({ $default }) => ($default ? '#2c7fb0' : '#707070')};
  border-radius: 3px;
  background: linear-gradient(#f2f2f2 50%, #dddddd 50%, #cfcfcf);
  box-shadow: inset 0 0 0 1px ${({ $default }) => ($default ? '#5cd3f7' : '#fcfcfc')};
  font-size: 13px;
  color: #000;

  &:disabled {
    border-color: #adb2b5;
    background: #f4f4f4;
    color: #a0a0a0;
  }
`;

const ListButtons = styled.div`
  display: flex;
  justify-content: space-between;
  padding: 6px 27px 0 25px;
`;

const RightColumn = styled.div`
  display: flex;
  flex-direction: column;
  gap: 4px;
  flex: 1;
  min-width: 0;
`;

const GridFrame = styled.div`
  display: flex;
  height: 343px;
  border: 1px solid #a0a0a0;
  border-top: 0;
  background: #f0f0f0;
  overflow: hidden;
`;

const TableClip = styled.div`
  flex: 1;
  min-width: 0;
  margin-right: 1px;
  padding-top: 2px;
  background: #c8c8c8;
  overflow: hidden;
`;

const Table = styled.table`
  width: 100%;
  table-layout: fixed;
  border-collapse: collapse;

  tr {
    height: 18px;
  }

  th,
  td {
    padding: 1px 0 0 3px;
    line-height: 16px;
    text-align: left;
    white-space: nowrap;
    overflow: hidden;
  }
`;

const Gutter = styled.col`
  width: 14px;
`;

const NameCol = styled.col`
  width: 129px;
`;

const GroupCell = styled.th`
  background: #c8c8c8;
`;

const GutterCell = styled.td`
  && {
    padding: 0 0 0 2px;
    background: #c8c8c8;
  }
`;

const NameCell = styled.th`
  font-weight: 400;
  background: ${({ $active }) => ($active ? '#c8c8c8' : '#fff')};
  border-right: 1px solid #c8c8c8;
  border-bottom: 1px solid #c8c8c8;
`;

const ValueCell = styled.td`
  font-size: 14px;
  font-weight: 700;
  background: #fff;
  border-bottom: 1px solid #c8c8c8;
`;

const Toggle = styled.button`
  position: relative;
  display: block;
  width: 9px;
  height: 9px;
  padding: 0;
  border: 1px solid #000;
  background: none;

  &::after {
    content: '';
    position: absolute;
    left: 1px;
    top: 3px;
    width: 5px;
    height: 1px;
    background: #000;
  }
`;

const Description = styled.div`
  height: 59px;
  padding: 2px 4px;
  border: 1px solid #a0a0a0;
  line-height: 15px;

  strong {
    display: block;
    line-height: 18px;
  }

  p {
    width: 260px;
    margin: 0;
  }
`;

const Footer = styled.div`
  display: flex;
  gap: 94px;
  position: relative;
  height: 69px;
  padding: 31px 0 0 89px;
`;

const Resize = styled.svg`
  position: absolute;
  right: 1px;
  bottom: 1px;
`;

const indicators = [
  ' Ichimoku',
  ' RGaussianFilter',
  ' RSqueeze',
  '_ECO2New_PaintBars_Sharkypkg_2',
  'a1MarketReminders',
  'a1RiskReward',
  'a1RolloverVolume',
  'AaHoltEMA',
  'AaLaguerreMA',
  'AaMA',
  'AaMovingAvgVsMovingAvg',
  'AaPriceLine',
  'AaT3',
  'AaTripleCCI',
];

const groups = [
  {
    title: 'Options',
    rows: [
      ['Session', 'Auto'],
      ['Session # for RTH', 'Third'],
      ['Settlement/Close', 'DailyBars'],
    ],
  },
  {
    title: 'User defined values',
    rows: [
      ['UserDefinedClose', '0'],
      ['UserDefinedHigh', '0'],
      ['UserDefinedLow', '0'],
    ],
  },
  {
    title: 'Data',
    rows: [
      ['Calculate on bar close', 'False'],
      ['Input series', 'ES 09-12 (5 Min)'],
      ['Maximum bars look back', 'TwoHundredFiftySix'],
    ],
  },
  {
    title: 'Visual',
    rows: [
      ['Auto scale', 'False'],
      ['Displacement', '0'],
      ['Display in Data Box', 'False'],
      ['Label', ''],
      ['Panel', 'Same as input series'],
      ['Price marker(s)', 'False'],
    ],
  },
];

function PropertyGrid() {
  return (
    <GridFrame>
      <TableClip>
        <Table>
          <colgroup>
            <Gutter />
            <NameCol />
            <col />
          </colgroup>
          {groups.map(({ title, rows }) => (
            <tbody key={title}>
              <tr>
                <GutterCell>
                  <Toggle aria-label={`Collapse ${title}`} />
                </GutterCell>
                <GroupCell colSpan={2}>{title}</GroupCell>
              </tr>
              {rows.map(([name, value]) => (
                <tr key={name}>
                  <GutterCell />
                  <NameCell scope="row" $active={name === 'Settlement/Close'}>
                    {name}
                  </NameCell>
                  <ValueCell>{value}</ValueCell>
                </tr>
              ))}
            </tbody>
          ))}
        </Table>
      </TableClip>
      <ScrollBar thumb={83} />
    </GridFrame>
  );
}

function IndicatorsDialog() {
  return (
    <Dialog role="dialog" aria-label="Indicators">
      <TitleBar>
        <span>Indicators</span>
        <CloseBox aria-label="Close dialog">
          <svg width="9" height="9" viewBox="0 0 9 9">
            <path d="M2 2l5 5M7 2l-5 5" stroke="#4a5562" strokeWidth="3" />
            <path d="M2 2l5 5M7 2l-5 5" stroke="#fff" />
          </svg>
        </CloseBox>
      </TitleBar>
      <Content>
        <Columns>
          <LeftColumn>
            <ListFrame $height={228}>
              <List role="listbox" aria-label="Available indicators">
                {indicators.map((name) => (
                  <Item key={name} role="option">
                    {name}
                  </Item>
                ))}
              </List>
              <ScrollBar thumb={19} />
            </ListFrame>
            <ListFrame $height={132}>
              <List role="listbox" aria-label="Applied indicators">
                <Item role="option" aria-selected="true" $selected>
                  anaFibsFromPriorSessionV38(ES 09-12 (5 Min),Third
                </Item>
                <Item role="option">Cristian_Toolbar_ver2_h</Item>
              </List>
            </ListFrame>
            <ListButtons>
              <Button disabled>New</Button>
              <Button>Remove</Button>
            </ListButtons>
          </LeftColumn>
          <RightColumn>
            <PropertyGrid />
            <Description>
              <strong>Settlement/Close</strong>
              <p>Select the settlement or close price used for calculating pivots.</p>
            </Description>
          </RightColumn>
        </Columns>
        <Footer>
          <Button $wide>OK</Button>
          <Button $wide $default>
            Apply
          </Button>
          <Button $wide>Close</Button>
          <Resize width="8" height="8" viewBox="0 0 8 8">
            <path d="M6 0h2v2h-2zM3 3h2v2h-2zM6 3h2v2h-2zM0 6h2v2h-2zM3 6h2v2h-2zM6 6h2v2h-2z" fill="#c0c0c0" />
          </Resize>
        </Footer>
      </Content>
    </Dialog>
  );
}

/* ---------- minimized account window ---------- */

const AccountWindow = styled.section`
  position: absolute;
  left: 7px;
  bottom: 0;
  display: flex;
  width: 395px;
  height: 25px;
  padding: 5px 4px 0 4px;
  border: 1px solid #5a6068;
  border-bottom: 0;
  border-radius: 6px 6px 0 0;
  background: linear-gradient(#bccad8, #d2dfec);
  box-shadow: inset 0 1px 0 #eef4fa;
  overflow: hidden;
  font: 15px/20px "Open Sans", "Noto Sans", sans-serif;
  color: #44525f;
`;

const AccountName = styled.span`
  flex: 1;
  padding-left: 4px;
`;

const LinkBox = styled.button`
  width: 22px;
  height: 22px;
  flex: none;
  margin-right: 9px;
  padding: 0;
  border: 2px solid #a0a0a0;
  background: #f0f0f0;
  font-size: 13px;
  color: #000;
`;

const WindowButton = styled.button`
  width: 39px;
  height: 26px;
  flex: none;
  margin-left: ${({ $first }) => ($first ? 0 : 2)}px;
  padding: 3px 0 0;
  border: 1px solid #8494a8;
  border-radius: 3px;
  background: #c3d1e0;
  box-shadow: inset 0 0 0 1px #dbe6f0;
  line-height: 0;
`;

const GridIcon = () => (
  <svg width="18" height="18" viewBox="0 0 18 18">
    <rect width="18" height="18" fill="#777a86" />
    <path d="M1 1h4v3H1zM1 6h4v3H1zM1 11h4v3H1zM1 16h4v2H1zM12 1h3v3h-3zM12 6h3v3h-3zM12 11h3v3h-3z" fill="#f0f0ff" />
    <path d="M6 1h5v3H6zM6 6h5v3H6zM6 11h5v3H6zM6 16h5v2H6z" fill="#ffad3b" />
  </svg>
);

function Account() {
  return (
    <AccountWindow>
      <GridIcon />
      <AccountName>Sim101</AccountName>
      <LinkBox>L</LinkBox>
      <WindowButton $first aria-label="Minimize">
        <svg width="14" height="18" viewBox="0 0 14 18">
          <rect x="1" y="7" width="12" height="5" rx="1" fill="#fff" stroke="#555b66" />
        </svg>
      </WindowButton>
      <WindowButton aria-label="Restore">
        <svg width="14" height="18" viewBox="0 0 14 18">
          <rect x="1" y="1" width="12" height="11" rx="1" fill="#e6e6e6" stroke="#555b66" />
          <rect x="5" y="5" width="4" height="3" fill="#c3d1e0" stroke="#555b66" />
        </svg>
      </WindowButton>
      <WindowButton aria-label="Close">
        <svg width="14" height="18" viewBox="0 0 14 18">
          <path d="M3 2l8 9M11 2l-8 9" stroke="#555b66" strokeWidth="5" />
          <path d="M3 2l8 9M11 2l-8 9" stroke="#fff" strokeWidth="3" />
        </svg>
      </WindowButton>
    </AccountWindow>
  );
}

function App() {
  return (
    <Page>
      <GlobalStyle />
      <Toolbar />
      <Workspace>
        <Chart />
      </Workspace>
      <IndicatorsDialog />
      <Account />
    </Page>
  );
}

export default App;
